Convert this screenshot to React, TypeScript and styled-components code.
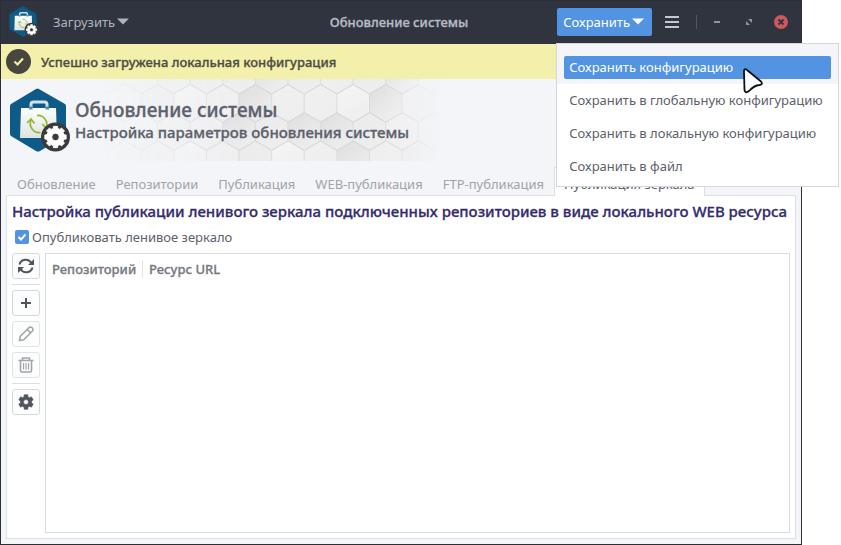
import React, { useId, useState } from "react";
import styled, { createGlobalStyle, css } from "styled-components";

const Global = createGlobalStyle`
  * { box-sizing: border-box; }
  html, body { margin: 0; background: #fff; }
  body, button, input, table { font-family: "Noto Sans", sans-serif; font-size: 13px; line-height: 20px; }
  button { margin: 0; padding: 0; cursor: default; }
  h1, h2, h3, p { margin: 0; }
`;

const strongText = css`
  font-weight: 500;
  -webkit-text-stroke: 0.3px currentColor;
`;

const Desktop = styled.div`
  display: flex;
  min-height: 100vh;
  padding-right: 39px;
`;

const Window = styled.div`
  flex: 1;
  min-width: 0;
  display: flex;
  flex-direction: column;
  border: 1px solid #2b2e39;
  background: #f4f5f8;
  color: #5c616c;
`;

const TitleBar = styled.header`
  display: grid;
  grid-template-columns: 1fr auto 1fr;
  align-items: center;
  height: 43px;
  padding: 0 12px 2px 8px;
  background: #2f343f;
  color: #c4c7cc;
`;

const TitleSide = styled.div<{ $end?: boolean }>`
  display: flex;
  align-items: center;
  gap: ${(p) => (p.$end ? "12px" : "13px")};
  justify-content: ${(p) => (p.$end ? "flex-end" : "flex-start")};
`;

const WindowTitle = styled.div`
  ${strongText}
  color: #b9bcc5;
  white-space: nowrap;
`;

const FlatButton = styled.button`
  display: flex;
  align-items: center;
  gap: 2px;
  border: 0;
  background: none;
  color: #aeb3bd;
`;

const SaveAnchor = styled.div`
  position: relative;
`;

const SaveButton = styled.button`
  display: flex;
  align-items: center;
  gap: 2px;
  height: 28px;
  padding: 0 8px 0 6px;
  border: 0;
  border-radius: 2px;
  background: #5294e2;
  color: #fff;
`;

const Menu = styled.div`
  position: absolute;
  z-index: 2;
  left: -1px;
  top: 35px;
  width: 283px;
  padding-bottom: 3px;
  border: 1px solid #d3d6da;
  background: #fff;
`;

const MenuRow = styled.div<{ $active?: boolean }>`
  display: flex;
  padding: ${(p) => (p.$active ? "12px 7px 5px" : "5px 7px")};
  background: ${(p) => (p.$active ? "#f4f5f8" : "#fff")};
`;

const MenuItem = styled.button<{ $active?: boolean }>`
  flex: 1;
  height: 23px;
  padding: 0 5px;
  border: 0;
  border-radius: 2px;
  text-align: left;
  white-space: nowrap;
  background: ${(p) => (p.$active ? "#5294e2" : "transparent")};
  color: ${(p) => (p.$active ? "#fff" : "#5c616c")};
`;

const Pointer = styled.svg`
  position: absolute;
  z-index: 3;
  left: 184px;
  top: 58px;
`;

const Separator = styled.span`
  width: 1px;
  height: 14px;
  margin-left: 4px;
  background: #505560;
`;

const WindowControls = styled.div`
  display: flex;
  align-items: center;
  gap: 16px;
`;

const IconButton = styled.button`
  display: flex;
  align-items: center;
  justify-content: center;
  width: 16px;
  height: 16px;
  border: 0;
  background: none;
`;

const InfoBar = styled.div`
  display: flex;
  align-items: center;
  gap: 10px;
  height: 35px;
  padding-left: 5px;
  background: #f3f0ac;
  color: #4d4d45;
  ${strongText}
`;

const Banner = styled.section`
  position: relative;
  display: flex;
  align-items: center;
  gap: 2px;
  height: 82px;
  padding-left: 8px;
  overflow: hidden;
`;

const Pattern = styled.svg`
  position: absolute;
  left: 0;
  top: 0;
`;

const BannerLogo = styled.div`
  position: relative;
  display: flex;
`;

const BannerText = styled.div`
  position: relative;
  color: #5c616c;
  white-space: nowrap;
`;

const BannerTitle = styled.h1`
  font-size: 19px;
  line-height: 24px;
  ${strongText}
`;

const BannerSubtitle = styled.p`
  font-size: 15px;
  line-height: 20px;
  ${strongText}
`;

const Tabs = styled.div`
  display: flex;
  align-items: flex-end;
  height: 34px;
  padding: 0 6px;
`;

const Tab = styled.button<{ $active?: boolean }>`
  height: 28px;
  padding: 6px 9px 1px;
  border: 1px solid transparent;
  border-bottom: 0;
  background: none;
  color: #a0a4aa;
  line-height: 20px;
  white-space: nowrap;
  ${(p) =>
    p.$active &&
    css`
      border-color: #dcdfe3;
      background: #fff;
      color: #5c616c;
      margin-bottom: -1px;
      height: 29px;
      padding-bottom: 2px;
      z-index: 1;
    `}
`;

const Page = styled.main`
  flex: 1;
  display: flex;
  flex-direction: column;
  margin: 0 5px 5px;
  padding: 4px 5px 5px;
  border: 1px solid #dcdfe3;
  background: #fff;
`;

const PageTitle = styled.h2`
  font-size: 15px;
  line-height: 22px;
  ${strongText}
  color: #352c6d;
  white-space: nowrap;
`;

const CheckLabel = styled.label`
  display: flex;
  align-items: center;
  gap: 3px;
  height: 31px;
  padding: 0 0 2px 3px;
`;

const CheckBox = styled.input`
  appearance: none;
  width: 14px;
  height: 14px;
  margin: 0;
  border-radius: 2px;
  border: 1px solid #c0c4ca;
  &:checked {
    border: 0;
    background: #5294e2
      url("data:image/svg+xml,%3Csvg xmlns='http://www.w3.org/2000/svg' viewBox='0 0 14 14'%3E%3Cpath d='M3.5 7l2.5 2.5 4.5-5' fill='none' stroke='white' stroke-width='2'/%3E%3C/svg%3E");
  }
`;

const Content = styled.div`
  flex: 1;
  display: flex;
  gap: 5px;
`;

const Toolbar = styled.div`
  display: flex;
  flex-direction: column;
  gap: 5px;
  width: 28px;
`;

const ToolButton = styled.button`
  display: flex;
  align-items: center;
  justify-content: center;
  height: 26px;
  border: 1px solid #d5d9df;
  border-radius: 3px;
  background: #fcfdfd;
  color: #4f545d;
  &:disabled {
    border-color: #e0e3e8;
    color: #a3a5a9;
  }
`;

const ToolDivider = styled.div`
  height: 1px;
  background: #dcdfe3;
`;

const TableFrame = styled.div`
  flex: 1;
  border: 1px solid #d8dbdf;
`;

const Table = styled.table`
  width: 100%;
  border-collapse: collapse;
  color: #767a82;
`;

const HeadCell = styled.th<{ $narrow?: boolean }>`
  width: ${(p) => (p.$narrow ? "97px" : "auto")};
  padding: 6px 0;
  text-align: left;
  ${strongText}
`;

const HeadLabel = styled.div<{ $divider?: boolean }>`
  height: 18px;
  line-height: 18px;
  padding-left: 6px;
  border-right: ${(p) => (p.$divider ? "1px solid #e2e4e8" : "0")};
`;

function gearPath(cx: number, cy: number, outer: number, inner: number, teeth: number) {
  const points: string[] = [];
  const step = (Math.PI * 2) / teeth;
  for (let i = 0; i < teeth; i++) {
    const a = i * step - Math.PI / 2;
    [
      [-0.32, inner],
      [-0.24, outer],
      [0.24, outer],
      [0.32, inner],
    ].forEach(([f, r]) => {
      points.push(`${(cx + r * Math.cos(a + f * step)).toFixed(2)} ${(cy + r * Math.sin(a + f * step)).toFixed(2)}`);
    });
  }
  return `M${points.join("L")}Z`;
}

function Logo({ size }: { size: number }) {
  const id = useId();
  return (
    <svg width={size} height={size} viewBox="0 0 64 64" aria-hidden="true">
      <defs>
        <linearGradient id={id} x1="0" y1="0" x2="0" y2="1">
          <stop offset="0" stopColor="#fdfdfd" />
          <stop offset="1" stopColor="#dfe2e4" />
        </linearGradient>
      </defs>
      <path d="M29 0.5 L56 16 Q57 17 57 18 V46 Q57 47 56 48 L31 63 Q29 64 27 63 L2 48 Q1 47 1 46 V18 Q1 17 2 16 L27 1 Q29 0 31 1Z" fill="#0d5b86" />
      <path d="M22 21 V16.5 Q22 14 24.5 14 H35.5 Q38 14 38 16.5 V21" fill="none" stroke="#d3e0e8" strokeWidth="3" />
      <path d="M12 20 H47 L48 50 H11Z" fill={`url(#${id})`} />
      <path d="M20 18.5h3.5v3H20zM36.5 18.5H40v3h-3.5z" fill="#5f87a0" />
      <g fill="none" stroke="#8dbb2c" strokeWidth="1.7">
        <path d="M28 27.500A9 9 0 0 1 37.300 39.500M31.500 44.500A9 9 0 0 1 22 32" />
        <path d="M41 37L37 40.500L33.500 36M18 35L22 31L25.500 35.500" />
      </g>
      <circle cx="46.5" cy="49" r="14.5" fill="#3b3b3d" />
      <path
        d={`${gearPath(46.5, 49, 10.8, 8.8, 8)}M46.5 45.2a3.8 3.8 0 1 0 0 7.600 3.800 3.800 0 1 0 0-7.600Z`}
        fill="#fff"
        fillRule="evenodd"
        stroke="#fff"
        strokeWidth="1"
        strokeLinejoin="round"
      />
    </svg>
  );
}

const HEX_WIDTH = 32.6;
const HEX_RADIUS = 18.8;
const SHADES = [
  [0, 1, 2, 2, 2, 3, 2, 1, 2, 3, 0],
  [0, 2, 0, 1, 3, 1, 1, 0, 3, 1, 1],
  [0, 0, 1, 1, 3, 2, 3, 3, 2, 1, 1],
  [0, 1, 0, 1, 2, 0, 1, 3, 1, 2, 1],
];
const TONES = ["#f6f6f7", "#f0f0f1", "#ebebec", "#dededf"];

function hexPoints(cx: number, cy: number) {
  return Array.from({ length: 6 }, (_, i) => {
    const a = (Math.PI / 3) * i - Math.PI / 2;
    return `${(cx + HEX_RADIUS * Math.cos(a)).toFixed(1)},${(cy + HEX_RADIUS * Math.sin(a)).toFixed(1)}`;
  }).join(" ");
}

function HexPattern() {
  return (
    <Pattern width="480" height="82" aria-hidden="true">
      <defs>
        <linearGradient id="fade">
          <stop offset="0.2" stopColor="#000" />
          <stop offset="0.5" stopColor="#fff" />
          <stop offset="0.8" stopColor="#fff" />
          <stop offset="0.92" stopColor="#000" />
        </linearGradient>
        <mask id="fadeMask">
          <rect width="480" height="82" fill="url(#fade)" />
        </mask>
        {TONES.map((tone, i) => (
          <linearGradient key={tone} id={`tone${i}`} x1="0" y1="0" x2="0.6" y2="1">
            <stop offset="0" stopColor={tone} />
            <stop offset="1" stopColor="#eeeeef" />
          </linearGradient>
        ))}
      </defs>
      <g mask="url(#fadeMask)">
        {SHADES.map((row, r) =>
          row.map((shade, c) => {
            const cx = 124 + c * HEX_WIDTH + (r % 2 ? 0 : -HEX_WIDTH / 2);
            const cy = -3.7 + r * 28.2;
            const points = hexPoints(cx, cy);
            const corners = points.split(" ");
            return (
              <g key={`${r}-${c}`}>
                <polygon points={points} fill={`url(#tone${shade})`} stroke="#dadadc" strokeWidth="0.8" />
                <polyline points={corners.slice(2, 5).join(" ")} fill="none" stroke="#bdbdc0" strokeWidth="1" />
              </g>
            );
          }),
        )}
      </g>
    </Pattern>
  );
}

const Caret = () => (
  <svg width="12" height="7" viewBox="0 0 12 7" aria-hidden="true">
    <path d="M0 0.5h12L6 6.5z" fill="currentColor" />
  </svg>
);

const RefreshIcon = () => (
  <svg width="18" height="16" viewBox="0 0 18 16" fill="none" stroke="currentColor" strokeWidth="2" aria-hidden="true">
    <path d="M2.5 6.5C4 0.8 11.5 0 14.5 5M15.5 9.5C14 15.2 6.5 16 3.5 11" />
    <path d="M17 1v6h-6zM1 15V9h6z" fill="currentColor" stroke="none" />
  </svg>
);

const PlusIcon = () => (
  <svg width="12" height="12" viewBox="0 0 12 12" aria-hidden="true">
    <path d="M6 1v10M1 6h10" stroke="currentColor" strokeWidth="2" />
  </svg>
);

const PencilIcon = () => (
  <svg width="16" height="16" viewBox="0 0 16 16" fill="none" stroke="currentColor" strokeWidth="1.6" aria-hidden="true">
    <path d="M1.5 14.5l0.8-4.300L10.800 1.800a2.300 2.300 0 0 1 3.400 3.400L5.800 13.700zM9.200 3.500l3.300 3.300" strokeLinejoin="round" />
  </svg>
);

const TrashIcon = () => (
  <svg width="16" height="16" viewBox="0 0 16 16" fill="none" stroke="currentColor" strokeWidth="1.6" aria-hidden="true">
    <path d="M0.5 3.5h15M4.5 3V1h7v2M2.5 4v9.5q0 1.5 1.5 1.5h8q1.5 0 1.5-1.5V4" />
    <path d="M5.5 6v6.5M8 6v6.5M10.5 6v6.5" strokeWidth="1.2" />
  </svg>
);

const GearIcon = () => (
  <svg width="16" height="16" viewBox="0 0 16 16" aria-hidden="true">
    <path
      d={`${gearPath(8, 8, 7.5, 5.6, 6)}M8 5.5a2.5 2.5 0 1 0 0 5 2.5 2.5 0 1 0 0-5Z`}
      fill="currentColor"
      fillRule="evenodd"
      stroke="currentColor"
      strokeWidth="0.6"
      strokeLinejoin="round"
    />
  </svg>
);

const MENU_ITEMS = [
  "Сохранить конфигурацию",
  "Сохранить в глобальную конфигурацию",
  "Сохранить в локальную конфигурацию",
  "Сохранить в файл",
];

const TABS = ["Обновление", "Репозитории", "Публикация", "WEB-публикация", "FTP-публикация", "Публикация зеркала"];

export default function App() {
  const [published, setPublished] = useState(true);
  return (
    <Desktop>
      <Global />
      <Window>
        <TitleBar>
          <TitleSide>
            <Logo size={31} />
            <FlatButton>
              Загрузить
              <Caret />
            </FlatButton>
          </TitleSide>
          <WindowTitle>Обновление системы</WindowTitle>
          <TitleSide $end>
            <SaveAnchor>
              <SaveButton aria-haspopup="menu" aria-expanded="true">
                Сохранить
                <Caret />
              </SaveButton>
              <Menu role="menu">
                {MENU_ITEMS.map((label, i) => (
                  <MenuRow key={label} $active={i === 0}>
                    <MenuItem role="menuitem" $active={i === 0}>
                      {label}
                    </MenuItem>
                  </MenuRow>
                ))}
              </Menu>
              <Pointer width="24" height="30" viewBox="0 0 24 30" aria-hidden="true">
                <path
                  d="M3 5.500Q3 1.800 6 4L20 15.500Q22.500 18.500 18.500 19Q13 19.500 8 25Q4.200 28 3.500 24Z"
                  fill="#fff"
                  stroke="#111"
                  strokeWidth="1.8"
                  strokeLinejoin="round"
                />
              </Pointer>
            </SaveAnchor>
            <IconButton aria-label="Меню">
              <svg width="14" height="12" viewBox="0 0 14 12">
                <path d="M0 1h14M0 6h14M0 11h14" stroke="#c4c7cc" strokeWidth="2" />
              </svg>
            </IconButton>
            <Separator />
            <WindowControls>
              <IconButton aria-label="Свернуть">
                <svg width="6" height="2" viewBox="0 0 6 2">
                  <path d="M0 1h6" stroke="#90949d" strokeWidth="2" />
                </svg>
              </IconButton>
              <IconButton aria-label="Развернуть">
                <svg width="6" height="6" viewBox="0 0 6 6">
                  <path d="M2 0h4v4zM0 2v4h4z" fill="#90949d" />
                </svg>
              </IconButton>
              <IconButton aria-label="Закрыть">
                <svg width="14" height="14" viewBox="0 0 14 14">
                  <circle cx="7" cy="7" r="7" fill="#cc575d" />
                  <path d="M4.5 4.5l5 5M9.5 4.5l-5 5" stroke="#2f343f" strokeWidth="1.8" />
                </svg>
              </IconButton>
            </WindowControls>
          </TitleSide>
        </TitleBar>
        <InfoBar role="status">
          <svg width="25" height="25" viewBox="0 0 25 25" aria-hidden="true">
            <circle cx="12.5" cy="12.5" r="12.5" fill="#47463f" />
            <path d="M8.5 12.5l3 3 5.500-6" fill="none" stroke="#f3f0ac" strokeWidth="2.2" />
          </svg>
          Успешно загружена локальная конфигурация
        </InfoBar>
        <Banner>
          <HexPattern />
          <BannerLogo>
            <Logo size={64} />
          </BannerLogo>
          <BannerText>
            <BannerTitle>Обновление системы</BannerTitle>
            <BannerSubtitle>Настройка параметров обновления системы</BannerSubtitle>
          </BannerText>
        </Banner>
        <Tabs role="tablist">
          {TABS.map((label, i) => (
            <Tab key={label} role="tab" aria-selected={i === 5} $active={i === 5}>
              {label}
            </Tab>
          ))}
        </Tabs>
        <Page>
          <PageTitle>Настройка публикации ленивого зеркала подключенных репозиториев в виде локального WEB ресурса</PageTitle>
          <CheckLabel>
            <CheckBox type="checkbox" checked={published} onChange={(e) => setPublished(e.target.checked)} />
            Опубликовать ленивое зеркало
          </CheckLabel>
          <Content>
            <Toolbar>
              <ToolButton aria-label="Обновить">
                <RefreshIcon />
              </ToolButton>
              <ToolDivider />
              <ToolButton aria-label="Добавить">
                <PlusIcon />
              </ToolButton>
              <ToolButton aria-label="Изменить" disabled>
                <PencilIcon />
              </ToolButton>
              <ToolButton aria-label="Удалить" disabled>
                <TrashIcon />
              </ToolButton>
              <ToolDivider />
              <ToolButton aria-label="Настройки">
                <GearIcon />
              </ToolButton>
            </Toolbar>
            <TableFrame>
              <Table>
                <thead>
                  <tr>
                    <HeadCell $narrow scope="col">
                      <HeadLabel $divider>Репозиторий</HeadLabel>
                    </HeadCell>
                    <HeadCell scope="col">
                      <HeadLabel>Ресурс URL</HeadLabel>
                    </HeadCell>
                  </tr>
                </thead>
              </Table>
            </TableFrame>
          </Content>
        </Page>
      </Window>
    </Desktop>
  );
}
